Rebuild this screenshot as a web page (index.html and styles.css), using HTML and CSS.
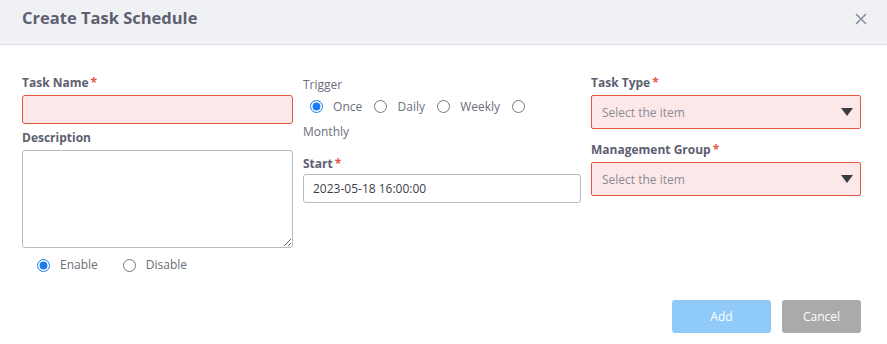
FILE: index.html
```html
<!DOCTYPE html>
<html lang="en">
<head>
    <meta charset="UTF-8">
    <meta name="viewport" content="width=device-width, initial-scale=1.0">
    <title>Create Task Schedule</title>
    <link rel="stylesheet" href="styles.css">
</head>
<body>
    <div class="dialog">
        <div class="dialog-header">
            <h2>Create Task Schedule</h2>
            <button class="close-btn" aria-label="Close">
                <svg width="12" height="12" viewBox="0 0 12 12">
                    <path d="M1 1 L11 11 M11 1 L1 11" stroke="#8a8e9c" stroke-width="1.6" fill="none"/>
                </svg>
            </button>
        </div>

        <div class="dialog-body">
            <div class="col">
                <label class="field-label" for="taskName">Task Name<span class="req">*</span></label>
                <input type="text" id="taskName" class="text-input invalid">

                <label class="field-label desc-label" for="description">Description</label>
                <textarea id="description" class="text-area"></textarea>

                <div class="radio-row status-row">
                    <label class="radio"><input type="radio" name="status" checked> Enable</label>
                    <label class="radio"><input type="radio" name="status"> Disable</label>
                </div>
            </div>

            <div class="col">
                <div class="plain-label">Trigger</div>
                <div class="trigger-row">
                    <label class="opt"><input type="radio" name="trigger" checked> Once</label>
                    <label class="opt"><input type="radio" name="trigger"> Daily</label>
                    <label class="opt"><input type="radio" name="trigger"> Weekly</label>
                    <label class="opt"><input type="radio" name="trigger"> Monthly</label>
                </div>

                <label class="field-label start-label" for="startTime">Start<span class="req">*</span></label>
                <input type="text" id="startTime" class="text-input" value="2023-05-18 16:00:00">
            </div>

            <div class="col">
                <label class="field-label" for="taskType">Task Type<span class="req">*</span></label>
                <div class="select-box invalid" id="taskType">
                    <span>Select the item</span>
                    <span class="caret"></span>
                </div>

                <label class="field-label group-label" for="mgmtGroup">Management Group<span class="req">*</span></label>
                <div class="select-box invalid" id="mgmtGroup">
                    <span>Select the item</span>
                    <span class="caret"></span>
                </div>
            </div>
        </div>

        <div class="dialog-footer">
            <button class="btn btn-add" disabled>Add</button>
            <button class="btn btn-cancel">Cancel</button>
        </div>
    </div>
</body>
</html>
```

FILE: styles.css
```css
body {
    margin: 0;
    font-family: "Open Sans", Arial, sans-serif;
    background-color: #fff;
    color: #5f6270;
}
.dialog {
    width: 887px;
    height: 344px;
}
.dialog-header {
    height: 45px;
    box-sizing: border-box;
    background-color: #f0f1f5;
    border-bottom: 1px solid #dddee3;
    display: flex;
    align-items: flex-start;
    justify-content: space-between;
    padding: 6px 20px 0 22px;
}
.dialog-header h2 {
    margin: 0;
    font-size: 16.5px;
    line-height: 24px;
    font-weight: bold;
    color: #5d6070;
}
.close-btn {
    background: none;
    border: none;
    padding: 0;
    margin-top: 7px;
    width: 12px;
    height: 12px;
    display: flex;
    cursor: pointer;
}
.dialog-body {
    display: grid;
    grid-template-columns: 271px 278px 270px;
    column-gap: 10px;
    padding: 30px 0 0 22px;
}
.col {
    display: flex;
    flex-direction: column;
    align-items: stretch;
}
.field-label {
    font-size: 12px;
    font-weight: bold;
    color: #5d6070;
    line-height: 16px;
    margin-bottom: 4px;
}
.plain-label {
    font-size: 12px;
    color: #6b6e7a;
    line-height: 16px;
    margin-top: 2px;
}
.req {
    color: #e8553f;
    margin-left: 2px;
}
.text-input {
    height: 29px;
    box-sizing: border-box;
    border: 1px solid #b9bbc2;
    border-radius: 3px;
    padding: 0 9px;
    font-family: inherit;
    font-size: 12px;
    color: #3c3f4a;
}
.text-input.invalid,
.select-box.invalid {
    background-color: #fde8e9;
    border-color: #e8553f;
}
.desc-label {
    margin-top: 6px;
}
.text-area {
    height: 98px;
    box-sizing: border-box;
    border: 1px solid #b9bbc2;
    border-radius: 3px;
    resize: vertical;
    font-family: inherit;
}
.radio-row {
    display: flex;
    flex-wrap: wrap;
    font-size: 12px;
    color: #6b6e7a;
}
.radio {
    display: flex;
    align-items: center;
    line-height: 20px;
}
.radio input {
    margin: 0 10px 0 0;
    width: 13px;
    height: 13px;
    accent-color: #1a7cf0;
}
.status-row {
    padding-left: 15px;
    margin-top: 7px;
    column-gap: 25px;
}
.trigger-row {
    font-size: 12px;
    color: #6b6e7a;
    line-height: 25px;
    margin-top: 1px;
}
.opt input {
    width: 13px;
    height: 13px;
    margin: 0 7px 0 9px;
    vertical-align: -2px;
    accent-color: #1a7cf0;
}
.opt:first-child input {
    margin-left: 7px;
}
.start-label {
    margin-top: 12px;
    margin-bottom: 2px;
}
.select-box {
    height: 34px;
    box-sizing: border-box;
    border: 1px solid #b9bbc2;
    border-radius: 2px;
    display: flex;
    align-items: center;
    justify-content: space-between;
    padding: 0 7px 0 10px;
    font-size: 12px;
    color: #8a8c96;
}
.caret {
    width: 0;
    height: 0;
    border-left: 6px solid transparent;
    border-right: 6px solid transparent;
    border-top: 8px solid #3a3c44;
}
.group-label {
    margin-top: 13px;
}
.dialog-footer {
    display: flex;
    justify-content: flex-end;
    gap: 11px;
    padding: 0 26px 0 0;
    margin-top: 25px;
}
.btn {
    height: 33px;
    border: none;
    border-radius: 3px;
    color: white;
    font-family: inherit;
    font-size: 12px;
}
.btn-add {
    width: 99px;
    background-color: #90caf9;
}
.btn-cancel {
    width: 79px;
    background-color: #aaaaaa;
}
```
